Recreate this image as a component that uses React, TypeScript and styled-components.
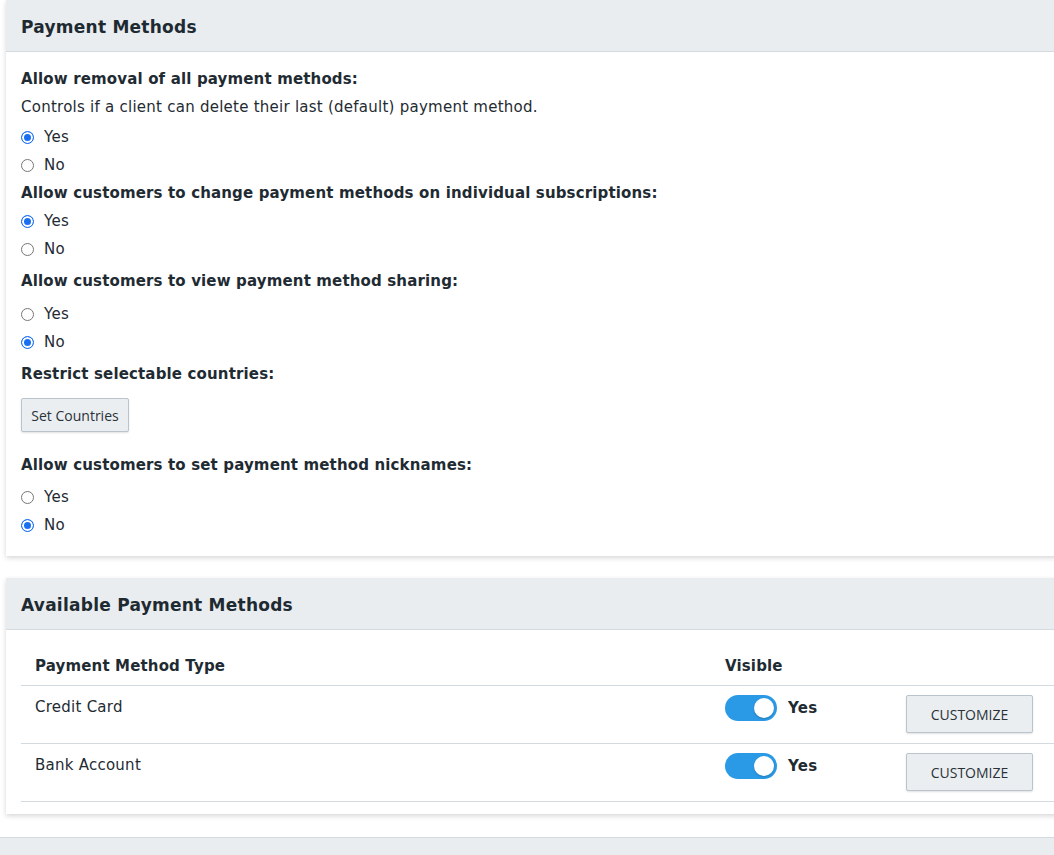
import styled, { createGlobalStyle } from 'styled-components';

const GlobalStyle = createGlobalStyle`
  html, body {
    margin: 0;
    padding: 0;
    background: #ffffff;
    overflow: hidden;
  }
  body {
    font-family: "DejaVu Sans", Verdana, sans-serif;
    color: #1f2b33;
  }
`;

const Page = styled.div`
  width: 1054px;
  height: 855px;
  overflow: hidden;
`;

const Card = styled.section<{ $gapAfter?: number }>`
  width: 1080px;
  margin-left: 6px;
  margin-bottom: ${(p) => p.$gapAfter ?? 22}px;
  background: #ffffff;
  box-shadow: 0 2px 5px rgba(0, 0, 0, 0.16);
`;

const CardHeader = styled.header`
  height: 52px;
  box-sizing: border-box;
  display: flex;
  align-items: center;
  padding: 2px 15px 0;
  background: #e9edf0;
  border-bottom: 1px solid #d3dbe0;
`;

const CardTitle = styled.h2`
  margin: 0;
  font-size: 17px;
  font-weight: bold;
  letter-spacing: 0.25px;
  color: #1e2a31;
`;

const CardBody = styled.div<{ $pb?: number }>`
  padding: 13px 15px ${(p) => p.$pb ?? 17}px;
`;

const Field = styled.div<{ $mt?: number }>`
  margin-top: ${(p) => p.$mt ?? 0}px;
`;

const Label = styled.div`
  font-size: 15px;
  font-weight: bold;
  letter-spacing: 0.15px;
  line-height: 28px;
`;

const Description = styled.div`
  font-size: 15px;
  letter-spacing: 0.25px;
  line-height: 28px;
`;

const RadioList = styled.div<{ $mt?: number }>`
  margin-top: ${(p) => p.$mt ?? 0}px;
  display: flex;
  flex-direction: column;
`;

const RadioRow = styled.label`
  height: 28px;
  display: flex;
  align-items: center;
  gap: 10px;
  font-size: 15px;
  letter-spacing: 0.25px;
`;

const RadioInput = styled.input.attrs({ type: 'radio' })`
  appearance: none;
  margin: 0;
  width: 13px;
  height: 13px;
  border-radius: 50%;
  border: 1px solid #767676;
  background: #ffffff;
  box-sizing: border-box;

  &:checked {
    border-color: #1a6ff0;
    background: #1a6ff0;
    box-shadow: inset 0 0 0 2px #ffffff;
  }
`;

const GreyButton = styled.button<{ $upper?: boolean }>`
  font-family: "Open Sans", sans-serif;
  font-size: 14px;
  color: #2a3238;
  background: #eaeef1;
  border: 1px solid #b9c4cc;
  border-radius: 2px;
  box-shadow: 0 1px 2px rgba(0, 0, 0, 0.12);
  text-transform: ${(p) => (p.$upper ? 'uppercase' : 'none')};
  padding: 0;
  cursor: pointer;
`;

const CountriesButton = styled(GreyButton)`
  margin-top: 10px;
  width: 108px;
  height: 34px;
`;

const Table = styled.div`
  margin-top: 4px;
  width: 1080px;
`;

const TableRow = styled.div<{ $head?: boolean }>`
  display: grid;
  grid-template-columns: 690px 181px 1fr;
  height: ${(p) => (p.$head ? 38 : 57)}px;
  border-bottom: 1px solid #d3dbe0;
  font-size: 15px;
  letter-spacing: ${(p) => (p.$head ? '0.15px' : '0.25px')};
  font-weight: ${(p) => (p.$head ? 'bold' : 'normal')};
`;

const Cell = styled.div<{ $head?: boolean }>`
  padding: ${(p) => (p.$head ? '10px 14px 0' : '12px 14px 0')};
  display: flex;
  align-items: flex-start;
  gap: 11px;
`;

const Toggle = styled.span<{ $on: boolean }>`
  position: relative;
  display: inline-block;
  width: 52px;
  height: 26px;
  border-radius: 13px;
  margin-top: -3px;
  background: ${(p) => (p.$on ? '#2b9ae6' : '#c5ced4')};
  flex-shrink: 0;

  &::after {
    content: '';
    position: absolute;
    top: 3px;
    left: ${(p) => (p.$on ? '29px' : '3px')};
    width: 20px;
    height: 20px;
    border-radius: 50%;
    background: #ffffff;
    box-shadow: 0 1px 2px rgba(0, 0, 0, 0.2);
  }
`;

const ToggleText = styled.span`
  font-weight: bold;
  line-height: 20px;
`;

const CustomizeButton = styled(GreyButton)`
  width: 127px;
  height: 38px;
  margin-top: -3px;
  letter-spacing: 0;
`;

const BottomStrip = styled.div`
  height: 40px;
  background: #e9edf0;
  border-top: 1px solid #d3dbe0;
`;

type Opt = { name: string; value: string };

const RadioGroup = ({ name, value, mt }: { name: string; value: string; mt?: number }) => {
  const options: Opt[] = [
    { name: 'Yes', value: 'yes' },
    { name: 'No', value: 'no' },
  ];
  return (
    <RadioList $mt={mt}>
      {options.map((o) => (
        <RadioRow key={o.value}>
          <RadioInput name={name} defaultChecked={o.value === value} />
          {o.name}
        </RadioRow>
      ))}
    </RadioList>
  );
};

const methods = ['Credit Card', 'Bank Account'];

const App = () => {
  return (
    <Page>
      <GlobalStyle />
      <Card>
        <CardHeader>
          <CardTitle>Payment Methods</CardTitle>
        </CardHeader>
        <CardBody>
          <Field>
            <Label>Allow removal of all payment methods:</Label>
            <Description>Controls if a client can delete their last (default) payment method.</Description>
            <RadioGroup name="removal" value="yes" mt={2} />
          </Field>
          <Field>
            <Label>Allow customers to change payment methods on individual subscriptions:</Label>
            <RadioGroup name="change" value="yes" />
          </Field>
          <Field $mt={4}>
            <Label>Allow customers to view payment method sharing:</Label>
            <RadioGroup name="sharing" value="no" mt={5} />
          </Field>
          <Field $mt={4}>
            <Label>Restrict selectable countries:</Label>
            <CountriesButton>Set Countries</CountriesButton>
          </Field>
          <Field $mt={19}>
            <Label>Allow customers to set payment method nicknames:</Label>
            <RadioGroup name="nicknames" value="no" mt={4} />
          </Field>
        </CardBody>
      </Card>

      <Card $gapAfter={23}>
        <CardHeader>
          <CardTitle>Available Payment Methods</CardTitle>
        </CardHeader>
        <CardBody $pb={12}>
          <Table>
            <TableRow $head>
              <Cell $head>Payment Method Type</Cell>
              <Cell $head>Visible</Cell>
              <Cell $head />
            </TableRow>
            {methods.map((m) => (
              <TableRow key={m}>
                <Cell>{m}</Cell>
                <Cell>
                  <Toggle $on />
                  <ToggleText>Yes</ToggleText>
                </Cell>
                <Cell>
                  <CustomizeButton $upper>Customize</CustomizeButton>
                </Cell>
              </TableRow>
            ))}
          </Table>
        </CardBody>
      </Card>

      <BottomStrip />
    </Page>
  );
};

export default App;
